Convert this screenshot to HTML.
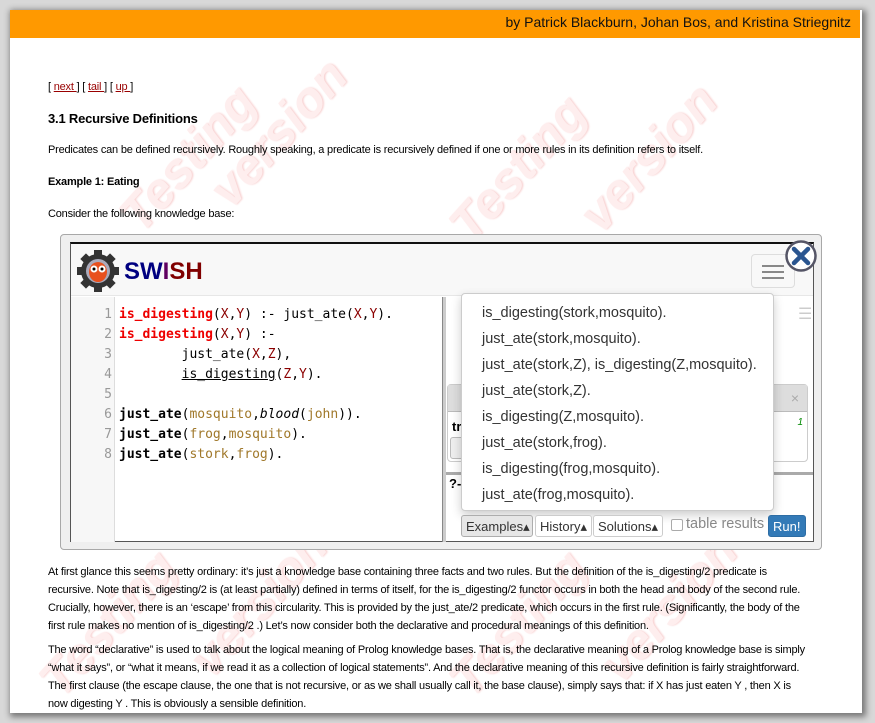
<!DOCTYPE html>
<html><head><meta charset="utf-8"><style>
*{box-sizing:border-box;margin:0;padding:0}
html,body{width:875px;height:723px;overflow:hidden;background:#d8d8d8}
body{position:relative;font-family:"Liberation Sans",sans-serif}
#paper{position:absolute;left:10px;top:10px;width:852px;height:703px;background:#fff;box-shadow:2px 2px 6px 2px rgba(0,0,0,.45);overflow:hidden}
.bar{position:absolute;left:0;top:0;width:850px;height:28px;background:#ff9900;font-size:14px;color:#111;text-align:right;padding:4px 9px 0 0}
.t{position:absolute;left:38px;font-size:11px;color:#000;letter-spacing:-0.2px}
.t a{color:#990000}
.wm{position:absolute;font:italic bold 50px "Liberation Sans",sans-serif;color:#feeeee;text-shadow:1px 1px 2px #f8d0d0;transform:rotate(-48deg);transform-origin:left bottom;white-space:nowrap}
.mono{font-family:"DejaVu Sans Mono","Liberation Mono",monospace}
#sw{position:absolute;left:50px;top:224px;width:762px;height:316px;background:#efefef;border:1px solid #a8a8a8;border-radius:4px}
#in{position:absolute;left:9px;top:7px;width:744px;height:300px;background:#fff;border:1px solid #555;border-top:2px solid #111}
.nav{position:absolute;left:0;top:0;width:742px;height:52px;background:#f8f8f8;border-bottom:1px solid #e7e7e7}
.code{position:absolute;left:0;top:53px;width:372px;height:245px}
.gut{position:absolute;left:0;top:0;width:44px;height:245px;background:#f7f7f7;border-right:1px solid #ddd}
.ln{position:absolute;left:0;width:41px;text-align:right;color:#999;font-size:13px}
.cl{position:absolute;left:48px;font-size:13px;white-space:pre;color:#000}
.r{color:#e00;font-weight:bold}.v{color:#8b0000}.a{color:#a0782a}.b{font-weight:bold}
.dd{position:absolute;left:390px;top:49px;width:313px;height:218px;background:#fff;border:1px solid #ccc;border-radius:4px;box-shadow:0 4px 10px rgba(0,0,0,.2)}
.dd div{position:absolute;left:20px;font-size:14.5px;color:#333;white-space:nowrap}
.btn{position:absolute;top:271px;height:22px;border:1px solid #ccc;border-radius:3px;background:#fff;font-size:13px;color:#333;padding:3px 4px 0}
</style></head><body>
<div id="paper">
<div class="wm" style="left:140px;top:175px">Testing</div>
<div class="wm" style="left:230px;top:150px">version</div>
<div class="wm" style="left:470px;top:185px">Testing</div>
<div class="wm" style="left:600px;top:175px">version</div>
<div class="wm" style="left:60px;top:640px">Testing</div>
<div class="wm" style="left:210px;top:620px">version</div>
<div class="wm" style="left:470px;top:640px">Testing</div>
<div class="wm" style="left:620px;top:625px">version</div>
<div class="bar">by Patrick Blackburn, Johan Bos, and Kristina Striegnitz</div>
<div class="t" style="top:71px">[ <a href="#">next </a>] [ <a href="#">tail </a>] [ <a href="#">up </a>]</div>
<div class="t" style="top:101px;font-size:13px;font-weight:bold">3.1 Recursive Definitions</div>
<div class="t" style="top:134px">Predicates can be defined recursively. Roughly speaking, a predicate is recursively defined if one or more rules in its definition refers to itself.</div>
<div class="t" style="top:166px;font-weight:bold">Example 1: Eating</div>
<div class="t" style="top:198px">Consider the following knowledge base:</div>
<div id="sw"><div id="in">
 <div class="nav">
  <svg style="position:absolute;left:5px;top:5px" width="44" height="44" viewBox="0 0 44 44"><g fill="#333"><circle cx="22" cy="22" r="17"/><rect x="18" y="1" width="8" height="42"/><rect x="1" y="18" width="42" height="8"/><rect x="18" y="1" width="8" height="42" transform="rotate(45 22 22)"/><rect x="18" y="1" width="8" height="42" transform="rotate(-45 22 22)"/></g><circle cx="22" cy="22" r="12" fill="#aab"/><ellipse cx="22" cy="23" rx="9" ry="10" fill="#e8501e"/><circle cx="18" cy="20" r="3.5" fill="#fff"/><circle cx="26" cy="20" r="3.5" fill="#fff"/><circle cx="18" cy="20" r="1.5"/><circle cx="26" cy="20" r="1.5"/></svg>
  <div style="position:absolute;left:53px;top:14px;font-size:24px;font-weight:bold"><span style="color:#000080">SW</span><span style="color:#600060">I</span><span style="color:#800000">SH</span></div>
  <div style="position:absolute;left:680px;top:10px;width:44px;height:34px;border:1px solid #ddd;border-radius:4px"><div style="position:absolute;left:10px;top:10px;width:22px;height:2px;background:#888;box-shadow:0 6px 0 #888,0 12px 0 #888"></div></div>
 </div>
 <div class="code mono">
  <div class="gut"></div>
  <div class="ln" style="top:10px">1</div><div class="ln" style="top:30px">2</div><div class="ln" style="top:50px">3</div><div class="ln" style="top:70px">4</div><div class="ln" style="top:90px">5</div><div class="ln" style="top:110px">6</div><div class="ln" style="top:130px">7</div><div class="ln" style="top:150px">8</div>
  <div class="cl" style="top:10px"><span class="r">is_digesting</span>(<span class="v">X</span>,<span class="v">Y</span>) :- just_ate(<span class="v">X</span>,<span class="v">Y</span>).</div>
  <div class="cl" style="top:30px"><span class="r">is_digesting</span>(<span class="v">X</span>,<span class="v">Y</span>) :-</div>
  <div class="cl" style="top:50px">        just_ate(<span class="v">X</span>,<span class="v">Z</span>),</div>
  <div class="cl" style="top:70px">        <u>is_digesting</u>(<span class="v">Z</span>,<span class="v">Y</span>).</div>
  <div class="cl" style="top:110px"><span class="b">just_ate</span>(<span class="a">mosquito</span>,<i>blood</i>(<span class="a">john</span>)).</div>
  <div class="cl" style="top:130px"><span class="b">just_ate</span>(<span class="a">frog</span>,<span class="a">mosquito</span>).</div>
  <div class="cl" style="top:150px"><span class="b">just_ate</span>(<span class="a">stork</span>,<span class="a">frog</span>).</div>
 </div>
 <div style="position:absolute;left:371px;top:53px;width:4px;height:245px;background:#ccc;border-left:1px solid #888"></div>
 <div style="position:absolute;left:375px;top:228px;width:367px;height:3px;background:#aaa"></div>
 <div style="position:absolute;left:727px;top:60px;color:#ccc;font-size:16px">☰</div>
 <div style="position:absolute;left:376px;top:140px;width:361px;height:78px;border:1px solid #ccc;border-radius:4px">
  <div style="height:27px;background:#ddd;border-bottom:1px solid #bbb"></div>
  <div style="position:absolute;left:4px;top:34px;font-size:13px;font-weight:bold">tr</div>
  <div style="position:absolute;right:4px;top:32px;font-size:10px;color:#080;font-style:italic">1</div>
  <div style="position:absolute;left:2px;top:52px;width:20px;height:22px;border:1px solid #bbb;border-radius:3px;background:#eee"></div>
  <div style="position:absolute;right:8px;top:5px;color:#aaa;font-size:14px">×</div>
 </div>
 <div style="position:absolute;left:378px;top:232px;font-size:13px;font-weight:bold">?-</div>
 <div class="dd">
  <div style="top:11px">is_digesting(stork,mosquito).</div>
  <div style="top:37px">just_ate(stork,mosquito).</div>
  <div style="top:63px">just_ate(stork,Z), is_digesting(Z,mosquito).</div>
  <div style="top:89px">just_ate(stork,Z).</div>
  <div style="top:115px">is_digesting(Z,mosquito).</div>
  <div style="top:141px">just_ate(stork,frog).</div>
  <div style="top:167px">is_digesting(frog,mosquito).</div>
  <div style="top:193px">just_ate(frog,mosquito).</div>
 </div>
 <div class="btn" style="left:390px;width:72px;background:#e6e6e6;border-color:#adadad">Examples▴</div>
 <div class="btn" style="left:464px;width:57px">History▴</div>
 <div class="btn" style="left:522px;width:70px">Solutions▴</div>
 <div style="position:absolute;left:600px;top:275px;width:12px;height:12px;border:1px solid #aaa;border-radius:2px;background:#fff"></div>
 <div style="position:absolute;left:615px;top:272px;font-size:14.5px;color:#888">table results</div>
 <div class="btn" style="left:697px;width:38px;background:#337ab7;border-color:#2e6da4;color:#fff;font-size:13px">Run!</div>
</div>
 <svg style="position:absolute;left:724px;top:5px" width="32" height="32" viewBox="0 0 32 32"><circle cx="16" cy="16" r="14.5" fill="#fff" stroke="#556" stroke-width="2.5"/><path d="M9 9L23 23M23 9L9 23" stroke="#2a5590" stroke-width="4.5" stroke-linecap="round"/></svg>
</div>
<div class="t" style="top:553px;line-height:18px;width:802px">At first glance this seems pretty ordinary: it’s just a knowledge base containing three facts and two rules. But the definition of the is_digesting/2 predicate is<br>recursive. Note that is_digesting/2 is (at least partially) defined in terms of itself, for the is_digesting/2 functor occurs in both the head and body of the second rule.<br>Crucially, however, there is an ‘escape’ from this circularity. This is provided by the just_ate/2 predicate, which occurs in the first rule. (Significantly, the body of the<br>first rule makes no mention of is_digesting/2 .) Let’s now consider both the declarative and procedural meanings of this definition.</div>
<div class="t" style="top:631px;line-height:18px;width:802px">The word “declarative” is used to talk about the logical meaning of Prolog knowledge bases. That is, the declarative meaning of a Prolog knowledge base is simply<br>“what it says”, or “what it means, if we read it as a collection of logical statements”. And the declarative meaning of this recursive definition is fairly straightforward.<br>The first clause (the escape clause, the one that is not recursive, or as we shall usually call it, the base clause), simply says that: if X has just eaten Y , then X is<br>now digesting Y . This is obviously a sensible definition.</div>
</div>
</body></html>
